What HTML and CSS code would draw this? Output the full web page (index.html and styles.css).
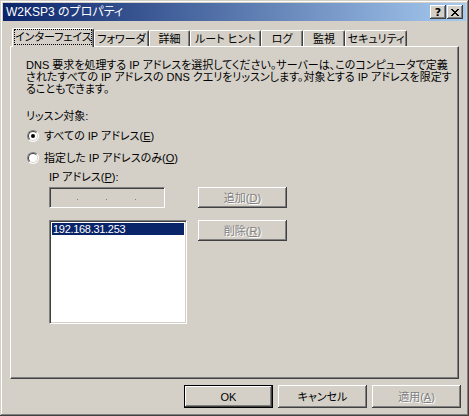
FILE: index.html
```html
<!DOCTYPE html>
<html lang="ja">
<head>
<meta charset="utf-8">
<title>W2KSP3 のプロパティ</title>
<link rel="stylesheet" href="styles.css">
</head>
<body>
<div class="window">
  <div class="titlebar">
    <span class="title">W2KSP3 のプロパティ</span>
    <div class="title-buttons">
      <div class="cap-btn"><span class="help-glyph">?</span></div>
      <div class="cap-btn">
        <svg width="8" height="7" viewBox="0 0 8 7" shape-rendering="crispEdges">
          <path fill="#000" d="M0 0h2v1h-2zM6 0h2v1h-2zM1 1h2v1h-2zM5 1h2v1h-2zM2 2h4v1h-4zM3 3h2v1h-2zM2 4h4v1h-4zM1 5h2v1h-2zM5 5h2v1h-2zM0 6h2v1h-2zM6 6h2v1h-2z"/>
        </svg>
      </div>
    </div>
  </div>

  <div class="tabctl">
    <div class="tabs">
      <div class="tab selected t1"><span class="focus">インターフェイス</span></div>
      <div class="tab t2">フォワーダ</div>
      <div class="tab t3">詳細</div>
      <div class="tab t4">ルート ヒント</div>
      <div class="tab t5">ログ</div>
      <div class="tab t6">監視</div>
      <div class="tab t7">セキュリティ</div>
    </div>
    <div class="panel">
      <p class="desc">DNS 要求を処理する IP アドレスを選択してください。サーバーは、このコンピュータで定義<br>されたすべての IP アドレスの DNS クエリをリッスンします。対象とする IP アドレスを限定す<br>ることもできます。</p>
      <div class="label listen">リッスン対象:</div>
      <div class="radio-row first">
        <span class="radio checked"></span>
        <span>すべての IP アドレス(<u>E</u>)</span>
      </div>
      <div class="radio-row second">
        <span class="radio"></span>
        <span>指定した IP アドレスのみ(<u>O</u>)</span>
      </div>
      <div class="label iplabel">IP アドレス(<u>P</u>):</div>
      <div class="ipgrid">
        <div class="ipfield">
          <span class="dot"></span><span class="dot"></span><span class="dot"></span>
        </div>
        <div class="btn disabled">追加(<u>D</u>)</div>
        <div class="listbox">
          <div class="item selected-item">192.168.31.253</div>
        </div>
        <div class="btn disabled">削除(<u>R</u>)</div>
      </div>
    </div>
  </div>

  <div class="footer">
    <div class="btn default">OK</div>
    <div class="btn">キャンセル</div>
    <div class="btn disabled">適用(<u>A</u>)</div>
  </div>
</div>
</body>
</html>
```
FILE: styles.css
```css
* { box-sizing: border-box; }
html, body { margin: 0; padding: 0; }
body {
  background: #D4D0C8;
  font-family: "Liberation Sans", "Noto Sans CJK JP", sans-serif;
  font-size: 11px;
  line-height: 12px;
  color: #000;
  font-feature-settings: "palt";
}
.window {
  width: 469px;
  height: 416px;
  padding: 3px;
  display: flex;
  flex-direction: column;
  background: #D4D0C8;
  box-shadow: inset -1px -1px #404040, inset 1px 1px #D4D0C8, inset -2px -2px #808080, inset 2px 2px #FFFFFF;
}
.titlebar {
  height: 18px;
  display: flex;
  align-items: center;
  padding-left: 3px;
  background: linear-gradient(to right, #0A246A, #A6CAF0);
  color: #fff;
}
.title { font-size: 12px; white-space: nowrap; }
.title-buttons {
  margin-left: auto;
  margin-right: 3px;
  display: flex;
  gap: 1px;
}
.cap-btn {
  width: 16px;
  height: 14px;
  background: #D4D0C8;
  display: flex;
  align-items: center;
  justify-content: center;
  box-shadow: inset -1px -1px #404040, inset 1px 1px #FFFFFF, inset -2px -2px #808080;
}
.help-glyph {
  font-family: "DejaVu Sans", sans-serif;
  font-weight: bold;
  font-size: 11px;
  line-height: 11px;
  color: #000;
}
.tabctl {
  margin: 7px 7px 0 7px;
  display: flex;
  flex-direction: column;
}
.tabs {
  height: 18px;
  display: flex;
  align-items: flex-start;
  padding-left: 2px;
}
.tab {
  height: 16px;
  margin-top: 2px;
  flex: none;
  display: flex;
  justify-content: center;
  align-items: center;
  white-space: nowrap;
  background: #D4D0C8;
  border-left: 1px solid #FFFFFF;
  border-top: 1px solid #FFFFFF;
  border-right: 1px solid #404040;
  border-top-left-radius: 2px;
  border-top-right-radius: 2px;
  box-shadow: inset -1px 0 #808080;
  padding-top: 1px;
}
.tab.selected {
  height: 19px;
  margin-top: 0;
  position: relative;
  z-index: 1;
  padding-top: 0;
  padding-bottom: 2px;
}
.focus {
  outline: 1px dotted #000;
  padding: 1px 0;
  display: block;
  width: 76px;
  text-align: center;
}
.t1 { width: 82px; }
.t2 { width: 55px; }
.t3 { width: 41px; }
.t4 { width: 71px; }
.t5 { width: 42px; }
.t6 { width: 42px; }
.t7 { width: 62px; }
.panel {
  height: 333px;
  border-left: 1px solid #FFFFFF;
  border-top: 1px solid #FFFFFF;
  border-right: 1px solid #404040;
  border-bottom: 1px solid #404040;
  box-shadow: inset -1px -1px #808080;
  padding: 12px 0 0 15px;
}
.desc {
  margin: 0;
  white-space: nowrap;
}
.label { white-space: nowrap; }
.listen { margin-top: 15px; }
.radio-row {
  display: flex;
  align-items: center;
  gap: 5px;
  height: 12px;
  padding-left: 1px;
  white-space: nowrap;
}
.radio-row.first { margin-top: 8px; }
.radio-row.second { margin-top: 10px; }
.radio {
  width: 12px;
  height: 12px;
  flex: none;
  border-radius: 50%;
  border: 1px solid;
  border-color: #808080 #FFFFFF #FFFFFF #808080;
  position: relative;
  background: #fff;
}
.radio::before {
  content: "";
  position: absolute;
  inset: 0;
  border-radius: 50%;
  border: 1px solid;
  border-color: #404040 #D4D0C8 #D4D0C8 #404040;
}
.radio.checked::after {
  content: "";
  position: absolute;
  left: 3px;
  top: 3px;
  width: 4px;
  height: 4px;
  border-radius: 50%;
  background: #000;
}
.iplabel { margin-top: 7px; padding-left: 23px; }
.ipgrid {
  margin-top: 4px;
  margin-left: 23px;
  display: grid;
  grid-template-columns: 149px 89px;
  grid-template-rows: 21px 104px;
  row-gap: 12px;
}
.ipfield {
  width: 116px;
  height: 21px;
  border: 1px solid;
  border-color: #808080 #FFFFFF #FFFFFF #808080;
  box-shadow: inset 1px 1px #404040, inset -1px -1px #D4D0C8;
  background: #D4D0C8;
  display: flex;
  align-items: center;
  padding-left: 27px;
  gap: 28px;
  padding-top: 4px;
}
.dot {
  width: 1px;
  height: 1px;
  background: #808080;
  flex: none;
}
.listbox {
  width: 138px;
  height: 104px;
  border: 1px solid;
  border-color: #808080 #FFFFFF #FFFFFF #808080;
  box-shadow: inset 1px 1px #404040, inset -1px -1px #D4D0C8;
  background: #fff;
  padding: 2px;
}
.item {
  height: 12px;
  line-height: 12px;
  padding-left: 1px;
  font-size: 11px;
  letter-spacing: -0.3px;
  white-space: nowrap;
}
.selected-item { background: #0A246A; color: #fff; }
.btn {
  width: 89px;
  height: 21px;
  display: flex;
  align-items: center;
  justify-content: center;
  white-space: nowrap;
  background: #D4D0C8;
  box-shadow: inset -1px -1px #404040, inset 1px 1px #FFFFFF, inset -2px -2px #808080;
}
.btn.disabled {
  color: #808080;
  text-shadow: 1px 1px #FFFFFF;
}
.footer {
  margin-top: 6px;
  margin-right: 5px;
  display: flex;
  justify-content: flex-end;
  gap: 5px;
}
.footer .btn { height: 23px; }
.btn.default {
  border: 1px solid #000;
  box-shadow: inset -1px -1px #404040, inset 1px 1px #FFFFFF, inset -2px -2px #808080;
}
```
